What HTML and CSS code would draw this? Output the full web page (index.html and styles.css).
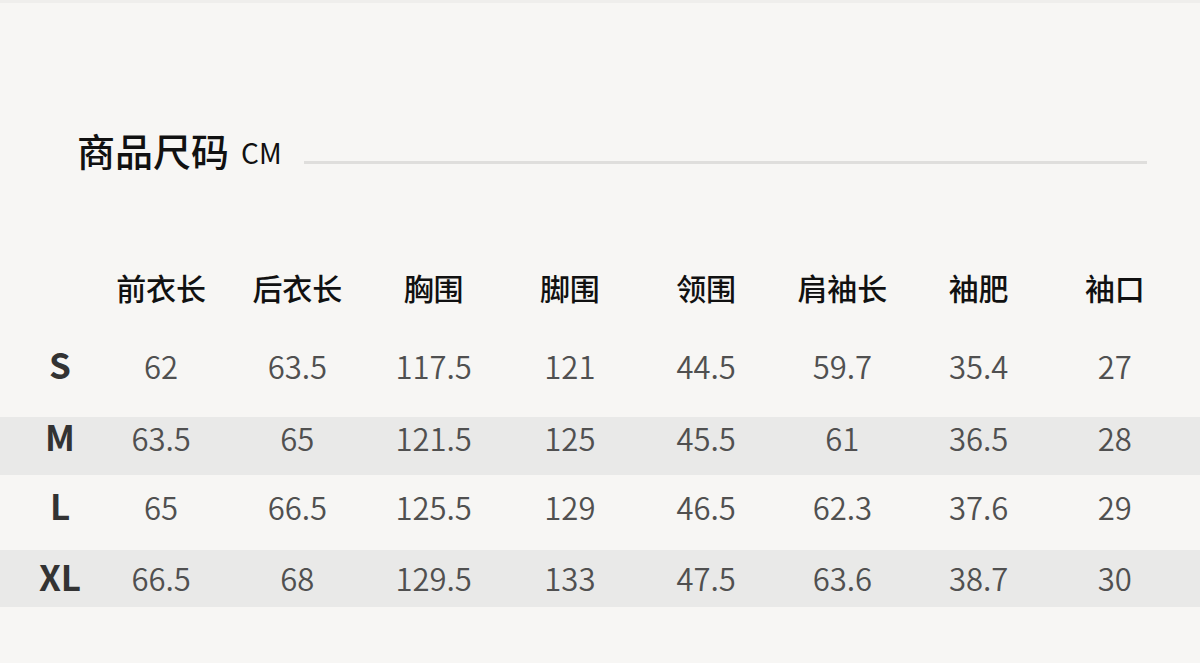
FILE: index.html
```html
<!DOCTYPE html>
<html lang="zh-CN">
<head>
<meta charset="utf-8">
<title>商品尺码</title>
<link rel="stylesheet" href="styles.css">
</head>
<body>
<div class="topbar"></div>
<div class="title-row">
  <h1 class="title">商品尺码<span class="unit">CM</span></h1>
  <div class="rule"></div>
</div>
<div class="table">
  <div class="row head">
    <div class="cell size"></div>
    <div class="cell">前衣长</div>
    <div class="cell">后衣长</div>
    <div class="cell">胸围</div>
    <div class="cell">脚围</div>
    <div class="cell">领围</div>
    <div class="cell">肩袖长</div>
    <div class="cell">袖肥</div>
    <div class="cell">袖口</div>
  </div>
  <div class="row r-s">
    <div class="cell size">S</div>
    <div class="cell">62</div>
    <div class="cell">63.5</div>
    <div class="cell">117.5</div>
    <div class="cell">121</div>
    <div class="cell">44.5</div>
    <div class="cell">59.7</div>
    <div class="cell">35.4</div>
    <div class="cell">27</div>
  </div>
  <div class="row r-m stripe">
    <div class="cell size">M</div>
    <div class="cell">63.5</div>
    <div class="cell">65</div>
    <div class="cell">121.5</div>
    <div class="cell">125</div>
    <div class="cell">45.5</div>
    <div class="cell">61</div>
    <div class="cell">36.5</div>
    <div class="cell">28</div>
  </div>
  <div class="row r-l">
    <div class="cell size">L</div>
    <div class="cell">65</div>
    <div class="cell">66.5</div>
    <div class="cell">125.5</div>
    <div class="cell">129</div>
    <div class="cell">46.5</div>
    <div class="cell">62.3</div>
    <div class="cell">37.6</div>
    <div class="cell">29</div>
  </div>
  <div class="row r-xl stripe">
    <div class="cell size">XL</div>
    <div class="cell">66.5</div>
    <div class="cell">68</div>
    <div class="cell">129.5</div>
    <div class="cell">133</div>
    <div class="cell">47.5</div>
    <div class="cell">63.6</div>
    <div class="cell">38.7</div>
    <div class="cell">30</div>
  </div>
</div>
</body>
</html>
```

FILE: styles.css
```css
* { box-sizing: border-box; }
html, body {
  margin: 0;
  padding: 0;
  background: #f7f6f4;
  font-family: "Noto Sans CJK SC", "Noto Sans", sans-serif;
  overflow: hidden;
}
.topbar {
  height: 3px;
  background: #efeeec;
}
.title-row {
  display: flex;
  align-items: flex-start;
  margin-top: 124px;
  padding-left: 77px;
  padding-right: 53px;
  height: 46px;
}
.title {
  margin: 0;
  font-size: 38px;
  line-height: 46px;
  font-weight: 500;
  color: #111;
  white-space: nowrap;
}
.unit {
  font-size: 28px;
  font-weight: 400;
  margin-left: 12px;
  vertical-align: 2px;
}
.rule {
  flex: 1;
  height: 3px;
  margin-top: 34px;
  margin-left: 22px;
  background: #dfdedc;
}
.table {
  margin-top: 87px;
}
.row {
  display: grid;
  grid-template-columns: 93px repeat(8, 136.25px);
  align-items: start;
}
.cell {
  text-align: center;
  font-size: 31px;
  line-height: 40px;
  font-weight: 350;
  color: #505050;
  white-space: nowrap;
}
.cell.size {
  padding-left: 27px;
  font-size: 35px;
  line-height: 35px;
  font-weight: 700;
  color: #333;
}
.head {
  height: 60px;
  padding-top: 7px;
}
.head .cell {
  font-size: 30px;
  font-weight: 500;
  color: #111;
}
.stripe { background: #e9e9e8; }
.r-s { height: 97px; padding-top: 26px; }
.r-m { height: 58px; padding-top: 1px; }
.r-l { height: 75px; padding-top: 12px; }
.r-xl { height: 57px; padding-top: 8px; }
```
